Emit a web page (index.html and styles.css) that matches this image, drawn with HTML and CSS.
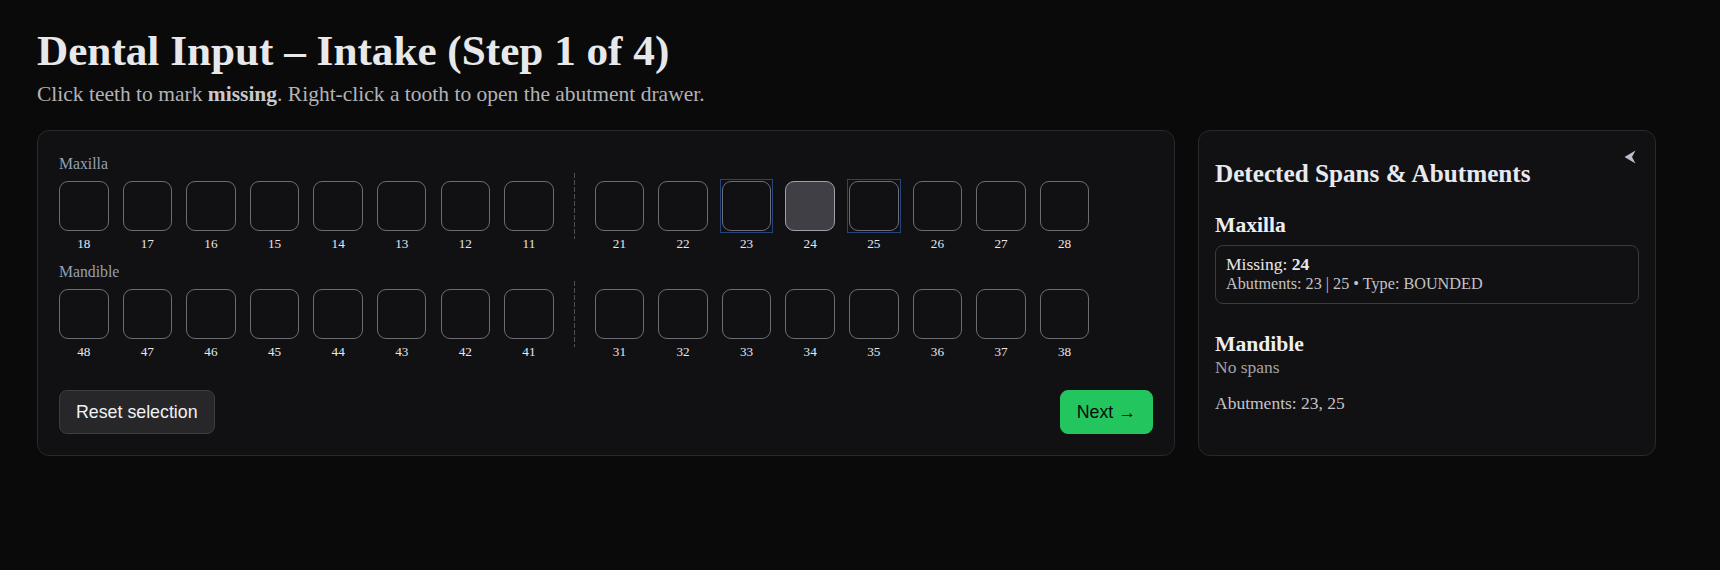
FILE: index.html
```html
<!DOCTYPE html>
<html lang="en">
<head>
<meta charset="utf-8">
<title>Dental Input – Intake</title>
<link rel="stylesheet" href="styles.css">
</head>
<body>
<div class="page">
  <h1 class="title">Dental Input – Intake (Step 1 of 4)</h1>
  <p class="subtitle">Click teeth to mark <b>missing</b>. Right-click a tooth to open the abutment drawer.</p>
  <div class="layout">
    <section class="card chart">
      <div class="jaw-label">Maxilla</div>
      <div class="jaw-row">
        <div class="quad">
          <div class="tooth"><div class="tooth-box"></div><span class="tooth-num">18</span></div>
          <div class="tooth"><div class="tooth-box"></div><span class="tooth-num">17</span></div>
          <div class="tooth"><div class="tooth-box"></div><span class="tooth-num">16</span></div>
          <div class="tooth"><div class="tooth-box"></div><span class="tooth-num">15</span></div>
          <div class="tooth"><div class="tooth-box"></div><span class="tooth-num">14</span></div>
          <div class="tooth"><div class="tooth-box"></div><span class="tooth-num">13</span></div>
          <div class="tooth"><div class="tooth-box"></div><span class="tooth-num">12</span></div>
          <div class="tooth"><div class="tooth-box"></div><span class="tooth-num">11</span></div>
        </div>
        <div class="divider"></div>
        <div class="quad">
          <div class="tooth"><div class="tooth-box"></div><span class="tooth-num">21</span></div>
          <div class="tooth"><div class="tooth-box"></div><span class="tooth-num">22</span></div>
          <div class="tooth"><div class="tooth-box is-abutment"></div><span class="tooth-num">23</span></div>
          <div class="tooth"><div class="tooth-box is-missing"></div><span class="tooth-num">24</span></div>
          <div class="tooth"><div class="tooth-box is-abutment"></div><span class="tooth-num">25</span></div>
          <div class="tooth"><div class="tooth-box"></div><span class="tooth-num">26</span></div>
          <div class="tooth"><div class="tooth-box"></div><span class="tooth-num">27</span></div>
          <div class="tooth"><div class="tooth-box"></div><span class="tooth-num">28</span></div>
        </div>
      </div>
      <div class="jaw-label jaw-label--lower">Mandible</div>
      <div class="jaw-row">
        <div class="quad">
          <div class="tooth"><div class="tooth-box"></div><span class="tooth-num">48</span></div>
          <div class="tooth"><div class="tooth-box"></div><span class="tooth-num">47</span></div>
          <div class="tooth"><div class="tooth-box"></div><span class="tooth-num">46</span></div>
          <div class="tooth"><div class="tooth-box"></div><span class="tooth-num">45</span></div>
          <div class="tooth"><div class="tooth-box"></div><span class="tooth-num">44</span></div>
          <div class="tooth"><div class="tooth-box"></div><span class="tooth-num">43</span></div>
          <div class="tooth"><div class="tooth-box"></div><span class="tooth-num">42</span></div>
          <div class="tooth"><div class="tooth-box"></div><span class="tooth-num">41</span></div>
        </div>
        <div class="divider"></div>
        <div class="quad">
          <div class="tooth"><div class="tooth-box"></div><span class="tooth-num">31</span></div>
          <div class="tooth"><div class="tooth-box"></div><span class="tooth-num">32</span></div>
          <div class="tooth"><div class="tooth-box"></div><span class="tooth-num">33</span></div>
          <div class="tooth"><div class="tooth-box"></div><span class="tooth-num">34</span></div>
          <div class="tooth"><div class="tooth-box"></div><span class="tooth-num">35</span></div>
          <div class="tooth"><div class="tooth-box"></div><span class="tooth-num">36</span></div>
          <div class="tooth"><div class="tooth-box"></div><span class="tooth-num">37</span></div>
          <div class="tooth"><div class="tooth-box"></div><span class="tooth-num">38</span></div>
        </div>
      </div>
      <div class="actions">
        <button class="btn btn-reset" type="button">Reset selection</button>
        <button class="btn btn-next" type="button">Next →</button>
      </div>
    </section>
    <aside class="card panel">
      <button class="collapse" type="button" aria-label="Collapse panel">
        <svg width="12" height="14" viewBox="0 0 12 14"><path d="M0.5 7 L11.5 0.5 L8 7 L11.5 13.5 Z" fill="#b9bfca"/></svg>
      </button>
      <h2 class="panel-title">Detected Spans &amp; Abutments</h2>
      <h3 class="jaw-title">Maxilla</h3>
      <div class="span-box">
        <div class="span-main">Missing: <b>24</b></div>
        <div class="span-meta">Abutments: 23 | 25 • Type: BOUNDED</div>
      </div>
      <h3 class="jaw-title jaw-title--lower">Mandible</h3>
      <div class="muted">No spans</div>
      <div class="abut-summary">Abutments: 23, 25</div>
    </aside>
  </div>
</div>
</body>
</html>
```

FILE: styles.css
```css
html, body {
  margin: 0;
  padding: 0;
  background: #0a0a0a;
}

body {
  font-family: "Liberation Serif", "Times New Roman", serif;
  color: #e6e7ea;
}

.page {
  padding: 26px 37px;
}

.title {
  margin: 0;
  font-size: 43.2px;
  line-height: normal;
  font-weight: 700;
  color: #e7e8eb;
}

.subtitle {
  margin: 7px 0 0;
  font-size: 21.5px;
  line-height: normal;
  color: #b3b3b6;
}

.subtitle b {
  color: #c9c9cc;
}

.layout {
  margin-top: 23px;
  max-width: 1619px;
  display: grid;
  grid-template-columns: 1fr 458px;
  gap: 23px;
  align-items: stretch;
}

.card {
  background: #111113;
  border: 1px solid #29292d;
  border-radius: 12px;
}

.chart {
  padding: 24px 21px 21px;
}

.jaw-label {
  font-size: 15.75px;
  line-height: 18px;
  color: #94a0b2;
}

.jaw-label--lower {
  margin-top: 10px;
}

.jaw-row {
  display: flex;
  align-items: flex-start;
}

.quad {
  display: flex;
  gap: 14.1px;
}

.tooth {
  width: 49.5px;
  padding-top: 8px;
  display: flex;
  flex-direction: column;
  align-items: center;
}

.tooth-box {
  position: relative;
  box-sizing: border-box;
  width: 49.5px;
  height: 50px;
  border: 1.5px solid #6c6c73;
  border-radius: 9px;
  background: #111113;
}

.tooth-box.is-missing {
  background: #3f3f45;
  border-color: #a0a0a6;
}

.tooth-box.is-abutment::after {
  content: "";
  position: absolute;
  inset: -3px;
  border: 1.5px solid #25457a;
}

.tooth-num {
  margin-top: 4px;
  font-size: 13.2px;
  line-height: 18px;
  color: #e8e8ea;
}

.divider {
  flex-shrink: 0;
  width: 1px;
  height: 66px;
  margin: 0 20px;
  background: repeating-linear-gradient(to bottom, #4f4f55 0 5px, transparent 5px 7px);
}

.actions {
  margin-top: 29px;
  display: flex;
  justify-content: space-between;
  align-items: center;
}

.btn {
  font-family: "Liberation Sans", Arial, sans-serif;
  font-size: 17.8px;
  line-height: 20px;
  padding: 11px 16px;
  border-radius: 8px;
  cursor: pointer;
}

.btn-reset {
  background: #27272a;
  border: 1px solid #3c3c42;
  color: #f1f1f3;
}

.btn-next {
  background: #22c55e;
  border: 1px solid #22c55e;
  color: #0b0b0b;
}

.panel {
  position: relative;
  padding: 18px 16px 16px;
}

.collapse {
  position: absolute;
  top: 19px;
  right: 19px;
  padding: 0;
  border: 0;
  background: transparent;
  display: flex;
  cursor: pointer;
}

.panel-title {
  margin: 10.5px 0 0;
  font-size: 25.2px;
  line-height: normal;
  font-weight: 700;
  color: #e8e9ee;
}

.jaw-title {
  margin: 25px 0 7px;
  font-size: 21.6px;
  line-height: normal;
  font-weight: 700;
  color: #eceef2;
}

.jaw-title--lower {
  margin: 28px 0 0;
}

.span-box {
  border: 1px solid #3a3a40;
  border-radius: 8px;
  padding: 8px 10px 9px;
}

.span-main {
  font-size: 17.5px;
  line-height: normal;
  color: #e8e8ea;
}

.span-meta {
  font-size: 16.2px;
  line-height: normal;
  color: #c2c2c6;
}

.muted {
  font-size: 17.5px;
  line-height: normal;
  color: #a3a3a8;
}

.abut-summary {
  margin-top: 15px;
  font-size: 17.5px;
  line-height: normal;
  color: #c4c4c8;
}
```
